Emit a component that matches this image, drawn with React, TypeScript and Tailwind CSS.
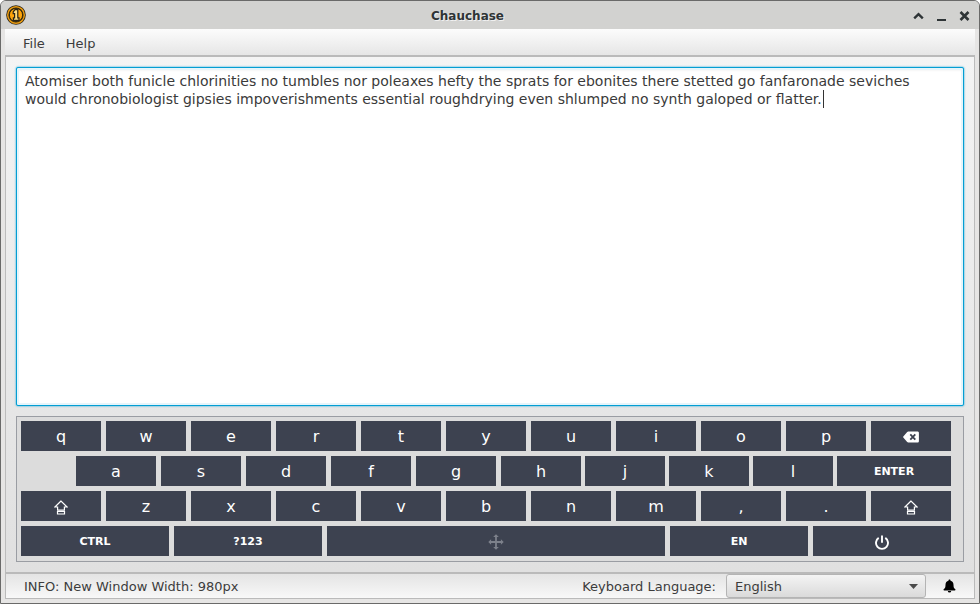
import { useState, type ReactNode } from "react";

const initialText =
  "Atomiser both funicle chlorinities no tumbles nor poleaxes hefty the sprats for ebonites there stetted go fanfaronade seviches would chronobiologist gipsies impoverishments essential roughdrying even shlumped no synth galoped or flatter.";

function Key({ children, label, className = "flex-[80]" }: { children: ReactNode; label?: string; className?: string }) {
  return (
    <button
      type="button"
      aria-label={label}
      className={`flex h-[30px] min-w-0 items-center justify-center bg-[#3d4250] pt-0.5 text-white ${className}`}
    >
      {children}
    </button>
  );
}

function Letters({ keys }: { keys: string[] }) {
  return (
    <>
      {keys.map((k) => (
        <Key key={k}>
          <span className="text-base leading-5">{k}</span>
        </Key>
      ))}
    </>
  );
}

function Caption({ children }: { children: ReactNode }) {
  return <span className="text-[11px] leading-4 font-bold">{children}</span>;
}

function CoinIcon() {
  return (
    <svg width="20" height="20" viewBox="0 0 20 20" aria-hidden="true">
      <circle cx="10" cy="10" r="9.8" fill="#2a2418" />
      <circle cx="10" cy="10" r="8.3" fill="none" stroke="#e89a10" strokeWidth="1.5" />
      <circle cx="10" cy="10" r="6.6" fill="#ffa50a" stroke="#3a2c08" strokeWidth="1" />
      <path d="M7.2 6.8 9 4.6h2.8v8.2H13v2.6H7.4v-2.6h1.2V8.6H7.2z" fill="#ffdf80" stroke="#2a2418" strokeWidth="1.2" />
    </svg>
  );
}

function BackspaceIcon() {
  return (
    <svg width="16" height="12" viewBox="0 0 16 12" aria-hidden="true">
      <path d="M5.2.4h9.3c.8 0 1.4.6 1.4 1.3v8.6c0 .7-.6 1.3-1.4 1.3H5.2c-.4 0-.7-.2-1-.5L.3 6.5a.8.8 0 0 1 0-1L4.2.9c.3-.3.6-.5 1-.5z" fill="#fff" />
      <path d="m7.3 3.4 5 5.2m0-5.2-5 5.2" stroke="#3d4250" strokeWidth="1.8" />
    </svg>
  );
}

function ShiftIcon() {
  return (
    <svg width="14" height="15" viewBox="0 0 14 15" fill="none" stroke="#fff" strokeWidth="1.2" aria-hidden="true">
      <path d="M7 1 .9 7h2.7v3.2h6.8V7h2.7z" />
      <path d="M3.500 11.500h7v2.500h-7z" />
    </svg>
  );
}

function MoveIcon() {
  return (
    <svg width="16" height="16" viewBox="0 0 16 16" aria-hidden="true">
      <path
        d="M8 .3 10.800 3.100H8.900v4h4V5.200L15.700 8l-2.800 2.800V8.900h-4v4h1.900L8 15.700l-2.800-2.800h1.900v-4h-4v1.900L.3 8l2.800-2.800v1.900h4v-4H5.200z"
        fill="#7d818b"
      />
    </svg>
  );
}

function PowerIcon() {
  return (
    <svg width="14" height="15" viewBox="0 0 14 15" fill="none" stroke="#fff" strokeWidth="1.9" aria-hidden="true">
      <path d="M7 .5v7.200" />
      <path d="M3.700 2.900a6 6 0 1 0 6.600 0" />
    </svg>
  );
}

function BellIcon() {
  return (
    <svg width="13" height="14" viewBox="0 0 13 14" fill="currentColor" aria-hidden="true">
      <path d="M6.500.5c.6 0 1 .4 1 1v.3c1.800.4 3 1.900 3 3.900 0 2.600.5 3.600 1.800 4.600.4.4.2 1.100-.5 1.100H1.200c-.7 0-.9-.7-.5-1.100C2 9.300 2.500 8.300 2.500 5.700c0-2 1.200-3.500 3-3.900v-.3c0-.6.4-1 1-1z" />
      <path d="M4.800 12h3.400a1.700 1.500 0 0 1-3.400 0z" />
    </svg>
  );
}

export default function App() {
  const [text, setText] = useState(initialText);

  return (
    <div className="flex h-screen flex-col overflow-hidden rounded-t-md border border-[#6a6a69] bg-[#e6e5e4] font-['DejaVu_Sans',sans-serif] text-[13px] leading-4 text-[#3c3c3c]">
      <header className="flex h-7 shrink-0 items-center bg-[#d2d2d0] px-[5px]">
        <CoinIcon />
        <h1 className="flex-1 pt-px pr-1 text-center text-xs leading-4 font-bold text-[#2e3436] [text-shadow:1px_1px_0_#f0f0f0]">Chauchase</h1>
        <div className="flex items-center justify-end gap-3 pt-px pr-1 text-[#2e3436]">
          <button type="button" aria-label="Shade">
            <svg width="11" height="12" viewBox="0 0 11 12" fill="none" stroke="currentColor" strokeWidth="2.4">
              <path d="m1.200 8.400 4.300-4.200 4.300 4.200" />
            </svg>
          </button>
          <button type="button" aria-label="Minimize">
            <svg width="11" height="12" viewBox="0 0 11 12" fill="currentColor">
              <path d="M1 9h9v2H1z" />
            </svg>
          </button>
          <button type="button" aria-label="Close">
            <svg width="11" height="12" viewBox="0 0 11 12" fill="none" stroke="currentColor" strokeWidth="2.6">
              <path d="m1.500 2 8 8m0-8-8 8" />
            </svg>
          </button>
        </div>
      </header>

      <div className="mx-1 mb-1 flex min-h-0 flex-1 flex-col">
        <nav className="flex h-7 shrink-0 items-center gap-[21px] border-b-2 border-[#bababa] bg-linear-to-b from-[#fcfcfc] to-[#e6e6e6] px-[18px] pt-[3px]">
          <button type="button">File</button>
          <button type="button">Help</button>
        </nav>

        <main className="flex min-h-0 flex-1 flex-col gap-[10px] border-x border-[#bcbcbc] bg-linear-to-b from-[#f4f4f4] to-[#e0e0e0] p-[10px]">
          <div className="relative flex min-h-0 flex-1">
            <textarea
              aria-label="Text"
              value={text}
              onChange={(e) => setText(e.target.value)}
              spellCheck={false}
              className="w-full resize-none rounded-[2px] border border-[#039ed3] bg-white px-2 pt-1 text-sm leading-[18px] text-[#3a3a3a] shadow-[0_0_2px_#039ed3,inset_0_0_0_2px_#e6f5fb,inset_0_4px_3px_-2px_#ececec] outline-none"
            />
            <span className="absolute top-[23px] left-[807px] h-[18px] w-px bg-[#333]" />
          </div>

          <section aria-label="Keyboard" className="flex shrink-0 flex-col gap-[5px] border border-[#9a9da3] bg-[#dcdcdc] pt-1 pr-3 pb-[5px] pl-1">
            <div className="flex gap-[5px]">
              <Letters keys={["q", "w", "e", "r", "t", "y", "u", "i", "o", "p"]} />
              <Key label="Backspace">
                <BackspaceIcon />
              </Key>
            </div>
            <div className="flex gap-1">
              <div className="flex flex-[560] gap-[5px]">
                <div className="flex-[50]" />
                <Letters keys={["a", "s", "d", "f", "g", "h"]} />
              </div>
              <div className="flex flex-[366] gap-1">
                <Letters keys={["j", "k", "l"]} />
                <Key className="flex-[114]">
                  <Caption>ENTER</Caption>
                </Key>
              </div>
            </div>
            <div className="flex gap-[5px]">
              <Key label="Left shift">
                <ShiftIcon />
              </Key>
              <Letters keys={["z", "x", "c", "v", "b", "n", "m", ",", "."]} />
              <Key label="Right shift">
                <ShiftIcon />
              </Key>
            </div>
            <div className="flex gap-[5px]">
              <Key className="flex-[148]">
                <Caption>CTRL</Caption>
              </Key>
              <Key className="flex-[148]">
                <Caption>?123</Caption>
              </Key>
              <Key className="flex-[338]" label="Space">
                <MoveIcon />
              </Key>
              <Key className="flex-[138]">
                <Caption>EN</Caption>
              </Key>
              <Key className="flex-[138]" label="Close keyboard">
                <PowerIcon />
              </Key>
            </div>
          </section>
        </main>

        <footer className="flex h-[27px] shrink-0 items-center border border-t-2 border-[#bababa] bg-linear-to-b from-[#e4e4e4] to-[#f8f8f8] px-[18px]">
          <p className="flex-1 pt-0.5">INFO: New Window Width: 980px</p>
          <label htmlFor="language" className="mr-[10px] pt-0.5">
            Keyboard Language:
          </label>
          <div className="relative mr-[17px]">
            <select
              id="language"
              defaultValue="English"
              className="block h-6 w-[200px] appearance-none rounded-[3px] border border-[#b4b4b4] bg-linear-to-b from-[#f4f4f4] to-[#dadada] px-2 pt-px"
            >
              <option>English</option>
            </select>
            <svg width="9" height="5" viewBox="0 0 9 5" className="pointer-events-none absolute top-[10px] right-2" aria-hidden="true">
              <path d="M0 0h9L4.500 5z" fill="#4a4a4a" />
            </svg>
          </div>
          <button type="button" aria-label="Notifications" className="text-black">
            <BellIcon />
          </button>
        </footer>
      </div>
    </div>
  );
}
